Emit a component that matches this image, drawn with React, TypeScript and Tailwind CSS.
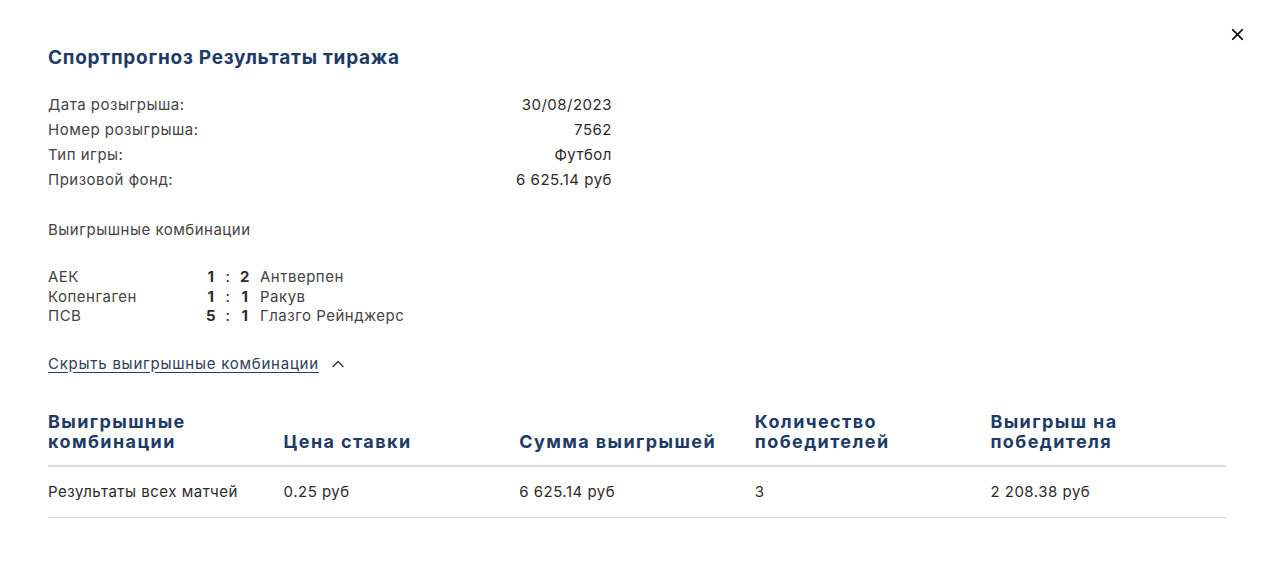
import { X, ChevronUp } from 'lucide-react';

const info = [
  { label: 'Дата розыгрыша:', value: '30/08/2023' },
  { label: 'Номер розыгрыша:', value: '7562' },
  { label: 'Тип игры:', value: 'Футбол' },
  { label: 'Призовой фонд:', value: '6 625.14 руб' },
];

const matches = [
  { home: 'АЕК', a: '1', b: '2', away: 'Антверпен' },
  { home: 'Копенгаген', a: '1', b: '1', away: 'Ракув' },
  { home: 'ПСВ', a: '5', b: '1', away: 'Глазго Рейнджерс' },
];

const headers = [
  ['Выигрышные', 'комбинации'],
  ['Цена ставки'],
  ['Сумма выигрышей'],
  ['Количество', 'победителей'],
  ['Выигрыш на', 'победителя'],
];

const row = ['Результаты всех матчей', '0.25 руб', '6 625.14 руб', '3', '2 208.38 руб'];

export default function App() {
  return (
    <div
      className="relative w-[1274px] h-[567px] bg-white text-[#2b2b2b]"
      style={{ fontFamily: 'Inter, "Noto Sans", sans-serif' }}
    >
      <button className="absolute right-[27px] top-[25px] text-black">
        <X size={19} strokeWidth={2.2} />
      </button>

      <div className="px-[48px] pt-[44px]">
        <h1 className="text-[19px] leading-[28px] font-bold text-[#1e3a66] tracking-[0.75px]">
          Спортпрогноз Результаты тиража
        </h1>

        <div className="mt-[20px] w-[564px] flex flex-col text-[15px] leading-[25px] tracking-[0.5px]">
          {info.map((r) => (
            <div key={r.label} className="flex justify-between">
              <span className="text-[#444]">{r.label}</span>
              <span>{r.value}</span>
            </div>
          ))}
        </div>

        <div className="mt-[25px] text-[15px] leading-[25px] text-[#444] tracking-[0.5px]">
          Выигрышные комбинации
        </div>

        <div className="mt-[25px] flex flex-col text-[15px] leading-[19.5px] tracking-[0.5px]">
          {matches.map((m) => (
            <div key={m.home} className="flex items-center">
              <span className="w-[155px] text-[#444]">{m.home}</span>
              <span className="w-[16px] font-bold text-center">{m.a}</span>
              <span className="w-[18px] text-center">:</span>
              <span className="w-[16px] font-bold text-center">{m.b}</span>
              <span className="ml-[7px] text-[#444]">{m.away}</span>
            </div>
          ))}
        </div>

        <div className="mt-[28px] flex items-center gap-[9px] text-[15px] leading-[20px] text-[#2d3e5c] tracking-[0.75px]">
          <span className="underline underline-offset-[3px]">Скрыть выигрышные комбинации</span>
          <ChevronUp size={20} strokeWidth={1.6} className="text-[#333]" />
        </div>

        <div className="mt-[38px] w-[1178px]">
          <div className="grid grid-cols-5 border-b-2 border-[#dcdcdc] pb-[13px]">
            {headers.map((h, i) => (
              <div
                key={i}
                className="flex flex-col justify-end text-[18px] leading-[20px] font-bold text-[#1e3a66] tracking-[1.4px]"
              >
                {h.map((l) => (
                  <span key={l}>{l}</span>
                ))}
              </div>
            ))}
          </div>
          <div className="grid grid-cols-5 border-b border-[#dcdcdc] py-[15px] text-[15px] leading-[20px] tracking-[0.5px]">
            {row.map((c, i) => (
              <div key={i}>{c}</div>
            ))}
          </div>
        </div>
      </div>
    </div>
  );
}
